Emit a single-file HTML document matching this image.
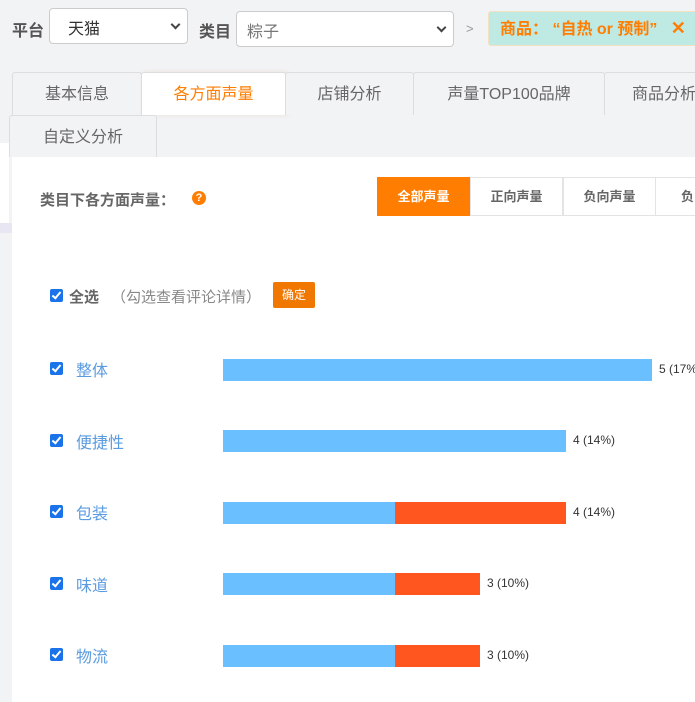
<!DOCTYPE html>
<html><head><meta charset="utf-8"><style>
*{margin:0;padding:0;box-sizing:border-box}
body{width:695px;height:702px;overflow:hidden;background:#f2f3f5;font-family:"Liberation Sans","Noto Sans CJK SC",sans-serif;position:relative}
.a{position:absolute;white-space:nowrap}
.lbl{font-size:16px;font-weight:bold;color:#555}
.sel{background:#fff;border:1px solid #ccc;border-radius:4px;height:36px;font-size:16px;color:#333;padding:6px 18px}
.sel.g{color:#777;padding-left:10px}
.car{position:absolute;right:8px;top:12px;width:7px;height:7px;border-right:2px solid #444;border-bottom:2px solid #444;transform:rotate(45deg)}
.tab{position:absolute;height:43px;border:1px solid #ddd;border-bottom:none;background:#f2f3f5;color:#666;font-size:16px;text-align:center;line-height:43px;border-radius:3px 3px 0 0;white-space:nowrap}
.btn{position:absolute;top:177px;height:39px;width:93px;border:1px solid #e3e3e3;background:#fff;color:#666;font-size:13px;font-weight:bold;text-align:center;line-height:37px;white-space:nowrap}
.cb{position:absolute;width:13px;height:13px;background:#1a73e8;border-radius:2px}
.cb:after{content:"";position:absolute;left:4px;top:1px;width:3px;height:7px;border-right:2px solid #fff;border-bottom:2px solid #fff;transform:rotate(40deg)}
.name{position:absolute;left:76px;font-size:16px;color:#5b9bdf;white-space:nowrap}
.b{position:absolute;height:22px;background:#6abffe}
.o{position:absolute;height:22px;background:#fe561e}
.v{position:absolute;font-size:12px;color:#333;white-space:nowrap}
</style></head><body>
<div class="a lbl" style="left:12px;top:17px">平台</div>
<div class="a sel" style="left:49px;top:8px;width:139px">天猫<span class="car"></span></div>
<div class="a lbl" style="left:199px;top:18px">类目</div>
<div class="a sel g" style="left:236px;top:11px;width:218px">粽子<span class="car"></span></div>
<div class="a" style="left:466px;top:21px;color:#999;font-size:13px">&gt;</div>
<div class="a" style="left:488px;top:11px;width:220px;height:35px;background:#bfeae4;border:1px solid #f5e0c0;border-radius:3px;color:#ff7d00;font-weight:bold;font-size:16px;line-height:33px;padding-left:11px">商品：&nbsp;“自热 or 预制”&nbsp;&nbsp;&nbsp;<b style="font-size:18px">✕</b></div>

<div class="tab" style="left:12px;top:72px;width:130px">基本信息</div>
<div class="tab" style="left:141px;top:72px;width:145px;background:#fff;color:#ff7d00;box-shadow:2px 0 4px rgba(200,150,100,.2)">各方面声量</div>
<div class="tab" style="left:285px;top:72px;width:129px">店铺分析</div>
<div class="tab" style="left:413px;top:72px;width:192px">声量TOP100品牌</div>
<div class="tab" style="left:604px;top:72px;width:120px">商品分析</div>
<div class="tab" style="left:9px;top:115px;width:148px;height:42px">自定义分析</div>
<div class="a" style="left:0;top:143px;width:9px;height:80px;background:#fff"></div>
<div class="a" style="left:0;top:223px;width:12px;height:10px;background:#e8e6f2"></div>
<div class="a" style="left:12px;top:157px;width:683px;height:545px;background:#fff"></div>

<div class="a" style="left:40px;top:189px;font-size:15px;font-weight:bold;color:#666">类目下各方面声量：</div>
<div class="a" style="left:192px;top:191px;width:14px;height:14px;border-radius:50%;background:#ff7d00;color:#fff;font-size:11px;font-weight:bold;text-align:center;line-height:14px">?</div>
<div class="btn" style="left:377px;background:#ff7d00;border-color:#ff7d00;color:#fff">全部声量</div>
<div class="btn" style="left:470px">正向声量</div>
<div class="btn" style="left:563px">负向声量</div>
<div class="btn" style="left:655px;text-align:left;padding-left:25px">负向</div>

<div class="cb" style="left:50px;top:289px"></div>
<div class="a" style="left:69px;top:286px;font-size:15px;font-weight:bold;color:#666">全选</div>
<div class="a" style="left:111px;top:286px;font-size:15px;color:#888">（勾选查看评论详情）</div>
<div class="a" style="left:273px;top:282px;width:42px;height:26px;background:#f07800;border-radius:2px;color:#fff;font-size:12px;text-align:center;line-height:26px">确定</div>

<div class="cb" style="left:50px;top:362px"></div><div class="name" style="top:357px">整体</div>
<div class="b" style="left:223px;top:359px;width:429px"></div><div class="v" style="left:659px;top:362px">5 (17%)</div>

<div class="cb" style="left:50px;top:434px"></div><div class="name" style="top:429px">便捷性</div>
<div class="b" style="left:223px;top:430px;width:343px"></div><div class="v" style="left:573px;top:433px">4 (14%)</div>

<div class="cb" style="left:50px;top:505px"></div><div class="name" style="top:500px">包装</div>
<div class="b" style="left:223px;top:502px;width:172px"></div><div class="o" style="left:395px;top:502px;width:171px"></div><div class="v" style="left:573px;top:505px">4 (14%)</div>

<div class="cb" style="left:50px;top:577px"></div><div class="name" style="top:572px">味道</div>
<div class="b" style="left:223px;top:573px;width:172px"></div><div class="o" style="left:395px;top:573px;width:85px"></div><div class="v" style="left:487px;top:576px">3 (10%)</div>

<div class="cb" style="left:50px;top:648px"></div><div class="name" style="top:643px">物流</div>
<div class="b" style="left:223px;top:645px;width:172px"></div><div class="o" style="left:395px;top:645px;width:85px"></div><div class="v" style="left:487px;top:648px">3 (10%)</div>
</body></html>
